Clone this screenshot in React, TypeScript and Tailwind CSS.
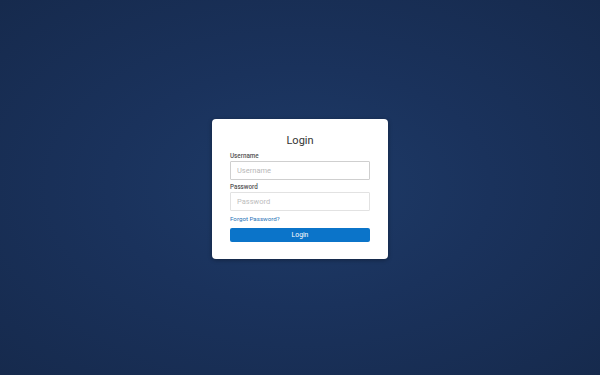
import { useState } from "react";

export default function App() {
  const [username, setUsername] = useState("");
  const [password, setPassword] = useState("");

  return (
    <div className="flex h-[375px] w-full items-center justify-center bg-[radial-gradient(ellipse_at_center,#1e3b68_0%,#1a325c_45%,#162a4d_100%)] font-['Roboto','Liberation_Sans',Arial,sans-serif]">
      <div className="mt-[3px] flex w-[176px] flex-col rounded-[4px] bg-white px-[18px] pb-[17px] pt-[15px] shadow-[0_1px_4px_rgba(0,0,0,0.35)]">
        <h1 className="text-center text-[11px] leading-[14px] text-[#333]">Login</h1>

        <label className="mt-[4px] text-[6.3px] font-medium leading-[8px] text-[#555]">Username</label>
        <input
          autoFocus
          value={username}
          onChange={(e) => setUsername(e.target.value)}
          placeholder="Username"
          className="mt-[1px] h-[19px] w-full rounded-[1px] border border-[#cfcfcf] px-[6px] text-[7.5px] text-[#333] outline-none placeholder:text-[#b8b8b8]"
        />

        <label className="mt-[3px] text-[6.3px] font-medium leading-[8px] text-[#555]">Password</label>
        <input
          type="password"
          value={password}
          onChange={(e) => setPassword(e.target.value)}
          placeholder="Password"
          className="mt-[1px] h-[19px] w-full rounded-[1px] border border-[#e2e2e2] px-[6px] text-[7.5px] text-[#333] outline-none placeholder:text-[#bdbdbd]"
        />

        <a href="#" className="mt-[4px] text-[6.2px] leading-[8px] text-[#1f73b7]">
          Forgot Password?
        </a>

        <button className="mt-[5px] h-[14px] w-full rounded-[2px] bg-[#0b74c9] text-[6.8px] leading-[14px] text-white">
          Login
        </button>
      </div>
    </div>
  );
}
